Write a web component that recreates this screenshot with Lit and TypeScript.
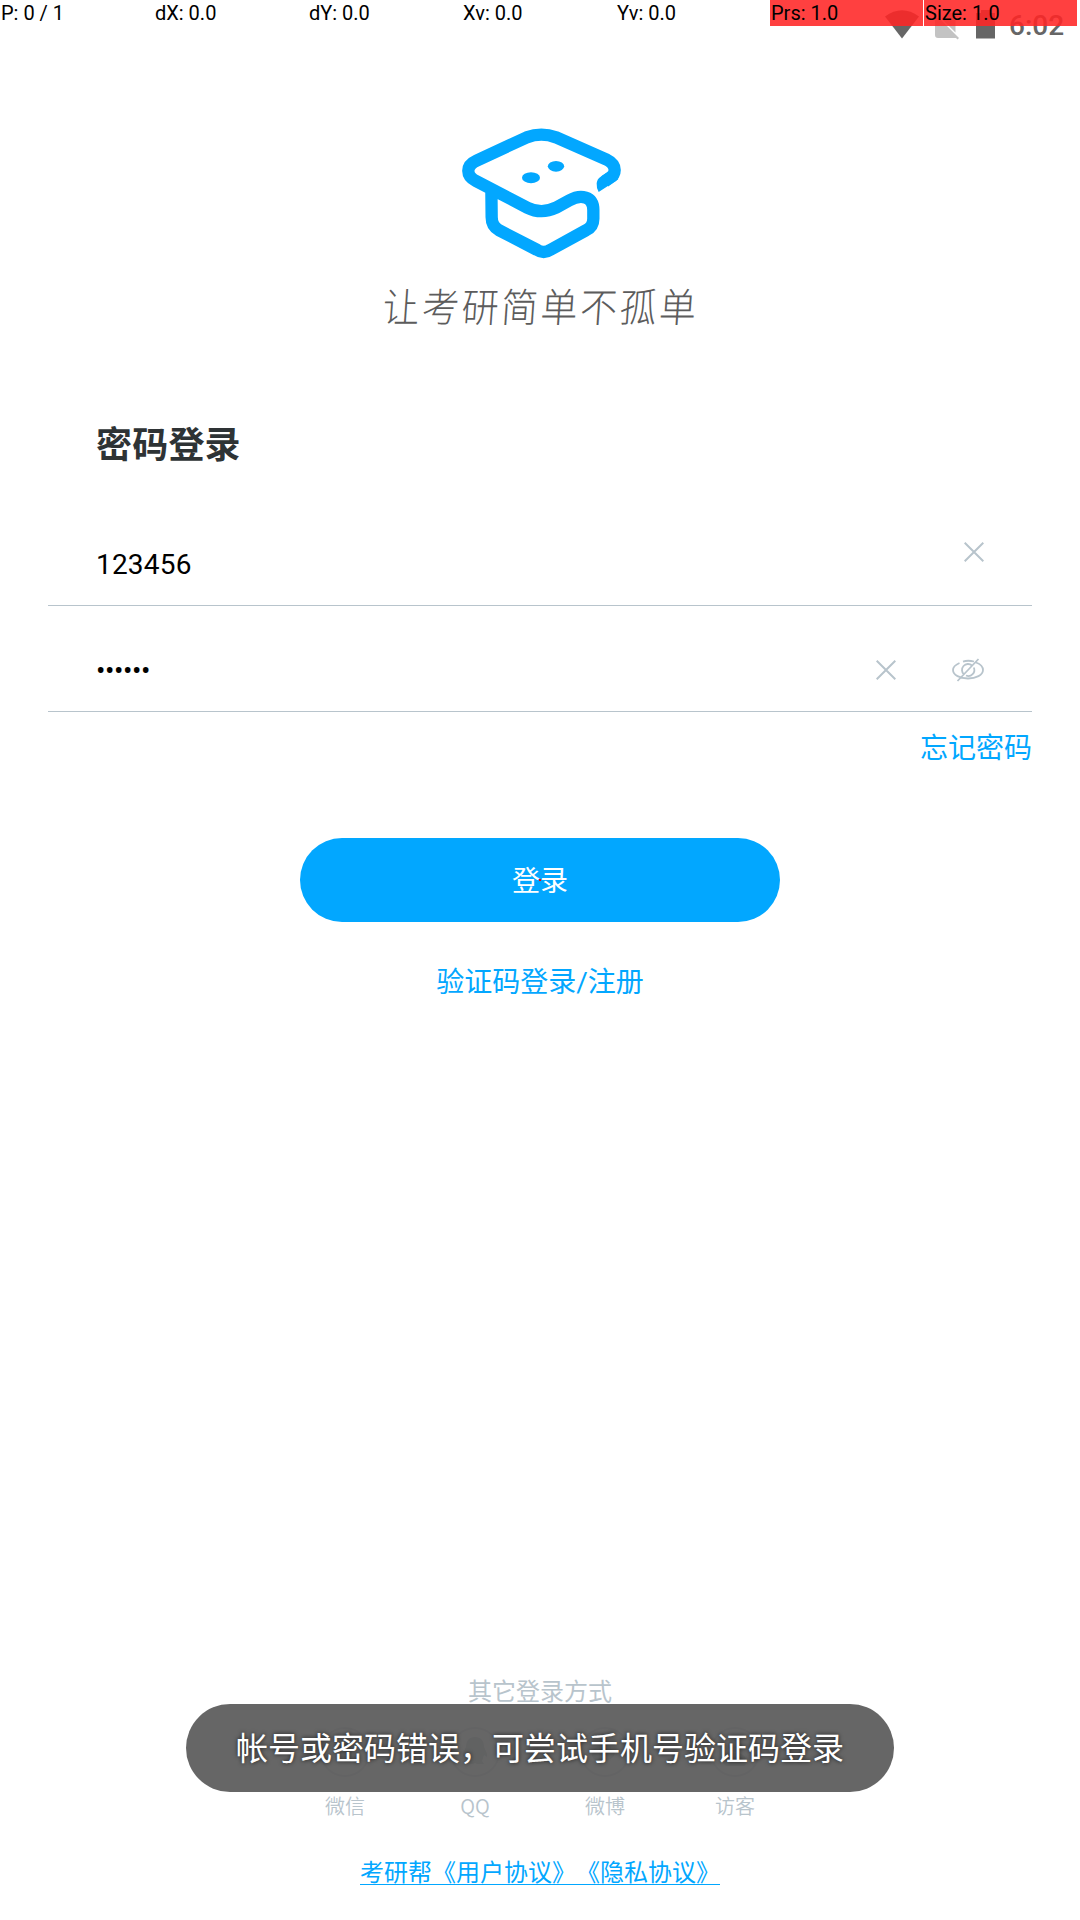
import { LitElement, html, css, svg } from "lit";
import { customElement } from "lit/decorators.js";

const clearIcon = html`<svg class="clear" width="20" height="20" viewBox="0 0 20 20">
  <path d="M.7.7 19.3 19.3M19.3.7.7 19.3" fill="none" stroke="#b8c4cc" stroke-width="2"/>
</svg>`;

const providers = [
  { label: "微信", icon: svg`<path d="M16 14h10l6 8v8H20l-6-6z"/>` },
  { label: "QQ", icon: svg`<path d="M25 10c-6 0-9 4-9 10-2 4-4 8-3 10l3-2 2 6-2 3h7l2-1 2 1h7l-2-3 2-6 3 2c1-2-1-6-3-10 0-6-3-10-9-10z"/>` },
  { label: "微博", icon: svg`<path d="M12 28c0-6 8-13 12-10 4-2 8 0 7 4 4 1 5 5 2 8-7 7-21 5-21-2z"/>` },
  { label: "访客", icon: svg`<circle cx="25" cy="18" r="7"/><path d="M13 36c0-14 24-14 24 0l-3 3H16z"/>` },
];

@customElement("app-root")
export class AppRoot extends LitElement {
  static styles = css`
    :host { display: block; }
    * { box-sizing: border-box; }
    svg { display: block; flex: none; }
    .screen {
      position: relative; width: 1080px; height: 1920px; overflow: hidden;
      background: #fff; display: flex; flex-direction: column; align-items: center;
      font-family: Roboto, "Noto Sans CJK SC", sans-serif; color: #000;
      text-spacing-trim: space-all;
    }
    .status { width: 1080px; height: 50px; display: flex; justify-content: flex-end; padding: 10px 17px 0 0; color: #666; }
    .clock { margin: 0 0 0 12px; font-size: 28px; font-weight: 500; line-height: 32px; width: 54px; white-space: nowrap; }
    .debug { position: absolute; left: 0; top: 0; display: flex; height: 26px; }
    .cell { width: 153px; margin-right: 1px; padding-left: 1px; font-size: 20px; line-height: 27px; white-space: nowrap; }
    .hot { background: linear-gradient(rgba(255, 0, 0, .75), rgba(255, 0, 0, .75)), rgba(255, 255, 255, .5); }
    .logo { margin-top: 60px; }
    .slogan {
      height: 70px; line-height: 71px; font-size: 37px; font-weight: 300; color: #5c5c5c;
      letter-spacing: 2.5px; padding-left: 2px; transform: skewX(-4deg) scaleY(1.08);
      font-family: "Noto Sans CJK SC", sans-serif;
    }
    .form { width: 984px; margin-top: 77px; }
    .title { margin: 0; padding: 1px 0 0 48px; height: 56px; font-size: 36px; line-height: 57px; font-weight: 700; letter-spacing: .2px; color: #2e3335; }
    .field { display: flex; padding: 0 48px; border-bottom: 1px solid #b8c4cc; }
    .account { height: 133px; padding-top: 52px; }
    .password { height: 106px; padding-top: 44px; }
    .value { flex: 1; font-size: 28px; line-height: 40px; letter-spacing: .2px; }
    .account .value { margin-top: 20px; }
    .password .value { letter-spacing: -.45px; margin-top: 1px; }
    .account .clear { margin-top: 17px; }
    .password .clear { margin: 10px 56px 0 0; }
    .eye { margin-top: 8px; }
    .forgot { text-align: right; font-size: 28px; line-height: 40px; margin-top: 17px; color: #02a7ff; }
    .login { width: 480px; height: 84px; margin-top: 69px; border: 0; border-radius: 42px; background: #02a7ff; color: #fff; font: inherit; font-size: 28px; line-height: 80px; padding: 4px 0 0; }
    .switch { margin-top: 41px; font-size: 28px; line-height: 40px; color: #02a7ff; }
    .footer { margin-top: auto; display: flex; flex-direction: column; align-items: center; }
    .other { font-size: 24px; line-height: 36px; color: #b8c4cc; }
    .providers { display: flex; margin-top: 17px; }
    .provider { width: 130px; display: flex; flex-direction: column; align-items: center; color: #b8c4cc; font-size: 20px; line-height: 28px; gap: 15px; }
    .provider span { font-family: "Noto Sans CJK SC", sans-serif; font-weight: 350; height: 28px; line-height: 27px; }
    .provider svg { fill: #b8c4cc; }
    .ring { fill: none; stroke: #d5dadd; stroke-width: 2; }
    .terms { margin: 36px 0 30px; font-size: 24px; line-height: 34px; color: #02a7ff; height: 34px; white-space: nowrap; }
    .terms span { display: inline-block; height: 29px; border-bottom: 1px solid #02a7ff; }
    .toast {
      position: absolute; left: 186px; top: 1704px; width: 708px; height: 88px; border-radius: 44px;
      background: rgba(89, 89, 89, .92); color: #fff; font-size: 32px; line-height: 90px; text-align: center;
      text-shadow: 0 0 4px rgba(0, 0, 0, .75); white-space: nowrap;
    }
    .pointer { position: absolute; left: 539px; top: 879px; width: 2px; height: 2px; background: #f00; }
  `;

  render() {
    return html`<main class="screen">
      <div class="status">
        <svg width="112" height="30" viewBox="0 0 112 30" fill="#666">
          <path d="M0 6.500Q17-6 34 6.500L17 28.500z"/>
          <path fill="#c3c3c3" d="M50 8H54L74 28 72.500 29.500 71 28H53Q50 28 50 25ZM57 9 63 3H68.500Q70.500 3 70.500 5V22.500Z"/>
          <path d="M91 3h5V0h9v3h5v25.500H91z"/>
        </svg>
        <div class="clock">6:02</div>
      </div>
      <svg class="logo" width="200" height="160" viewBox="0 0 600 480">
        <g fill="none" stroke="#02a7ff" stroke-width="37">
          <path d="M494 214 510 203Q524 195 524 180C524 163 512 155 498 148L348 82Q304 66 260 82L110 152C77 167 77 197 108 213L262 293Q304 314 348 293L388 271C422 252 460 258 460 300V326Q460 350 438 361L332 419Q311 433 290 419L176 360Q155 348 155 322L154 228"/>
        </g>
        <g fill="#02a7ff">
          <path d="M470 220Q471 207 482 200L500 188 535 208 476 246Q469 235 470 220Z"/>
          <ellipse cx="273" cy="203" rx="27" ry="16.500"/>
          <ellipse cx="348" cy="169" rx="24.500" ry="16"/>
        </g>
      </svg>
      <div class="slogan">让考研简单不孤单</div>
      <section class="form">
        <h1 class="title">密码登录</h1>
        <div class="field account"><div class="value">123456</div>${clearIcon}</div>
        <div class="field password">
          <div class="value">••••••</div>
          ${clearIcon}
          <svg class="eye" width="32" height="24" viewBox="0 0 32 24" fill="none" stroke="#b8c4cc" stroke-width="1.800">
            <path d="M7.500 5C3 7 1 9.500 1 12c0 5 7 8.500 15 8.500S31 17 31 12C31 8.500 28 6 24 4.500M22 3.500C18 2.500 14 2.500 11 3.600M20 7.500A6 6 0 1 0 12 16.500M21.800 9.500A6 6 0 0 1 14 17.500M5.500 23 26.500 1"/>
          </svg>
        </div>
        <div class="forgot">忘记密码</div>
      </section>
      <button class="login">登录</button>
      <div class="switch">验证码登录/注册</div>
      <footer class="footer">
        <div class="other">其它登录方式</div>
        <div class="providers">
          ${providers.map((p) => html`<div class="provider">
            <svg width="50" height="50" viewBox="0 0 50 50"><circle class="ring" cx="25" cy="25" r="24"/>${p.icon}</svg>
            <span>${p.label}</span>
          </div>`)}
        </div>
        <div class="terms"><span>考研帮《用户协议》《隐私协议》</span></div>
      </footer>
      <div class="toast">帐号或密码错误，可尝试手机号验证码登录</div>
      <div class="debug">
        ${["P: 0 / 1", "dX: 0.0", "dY: 0.0", "Xv: 0.0", "Yv: 0.0", "Prs: 1.0", "Size: 1.0"].map(
          (t, i) => html`<div class="cell ${i > 4 ? "hot" : ""}">${t}</div>`,
        )}
      </div>
      <div class="pointer"></div>
    </main>`;
  }
}
